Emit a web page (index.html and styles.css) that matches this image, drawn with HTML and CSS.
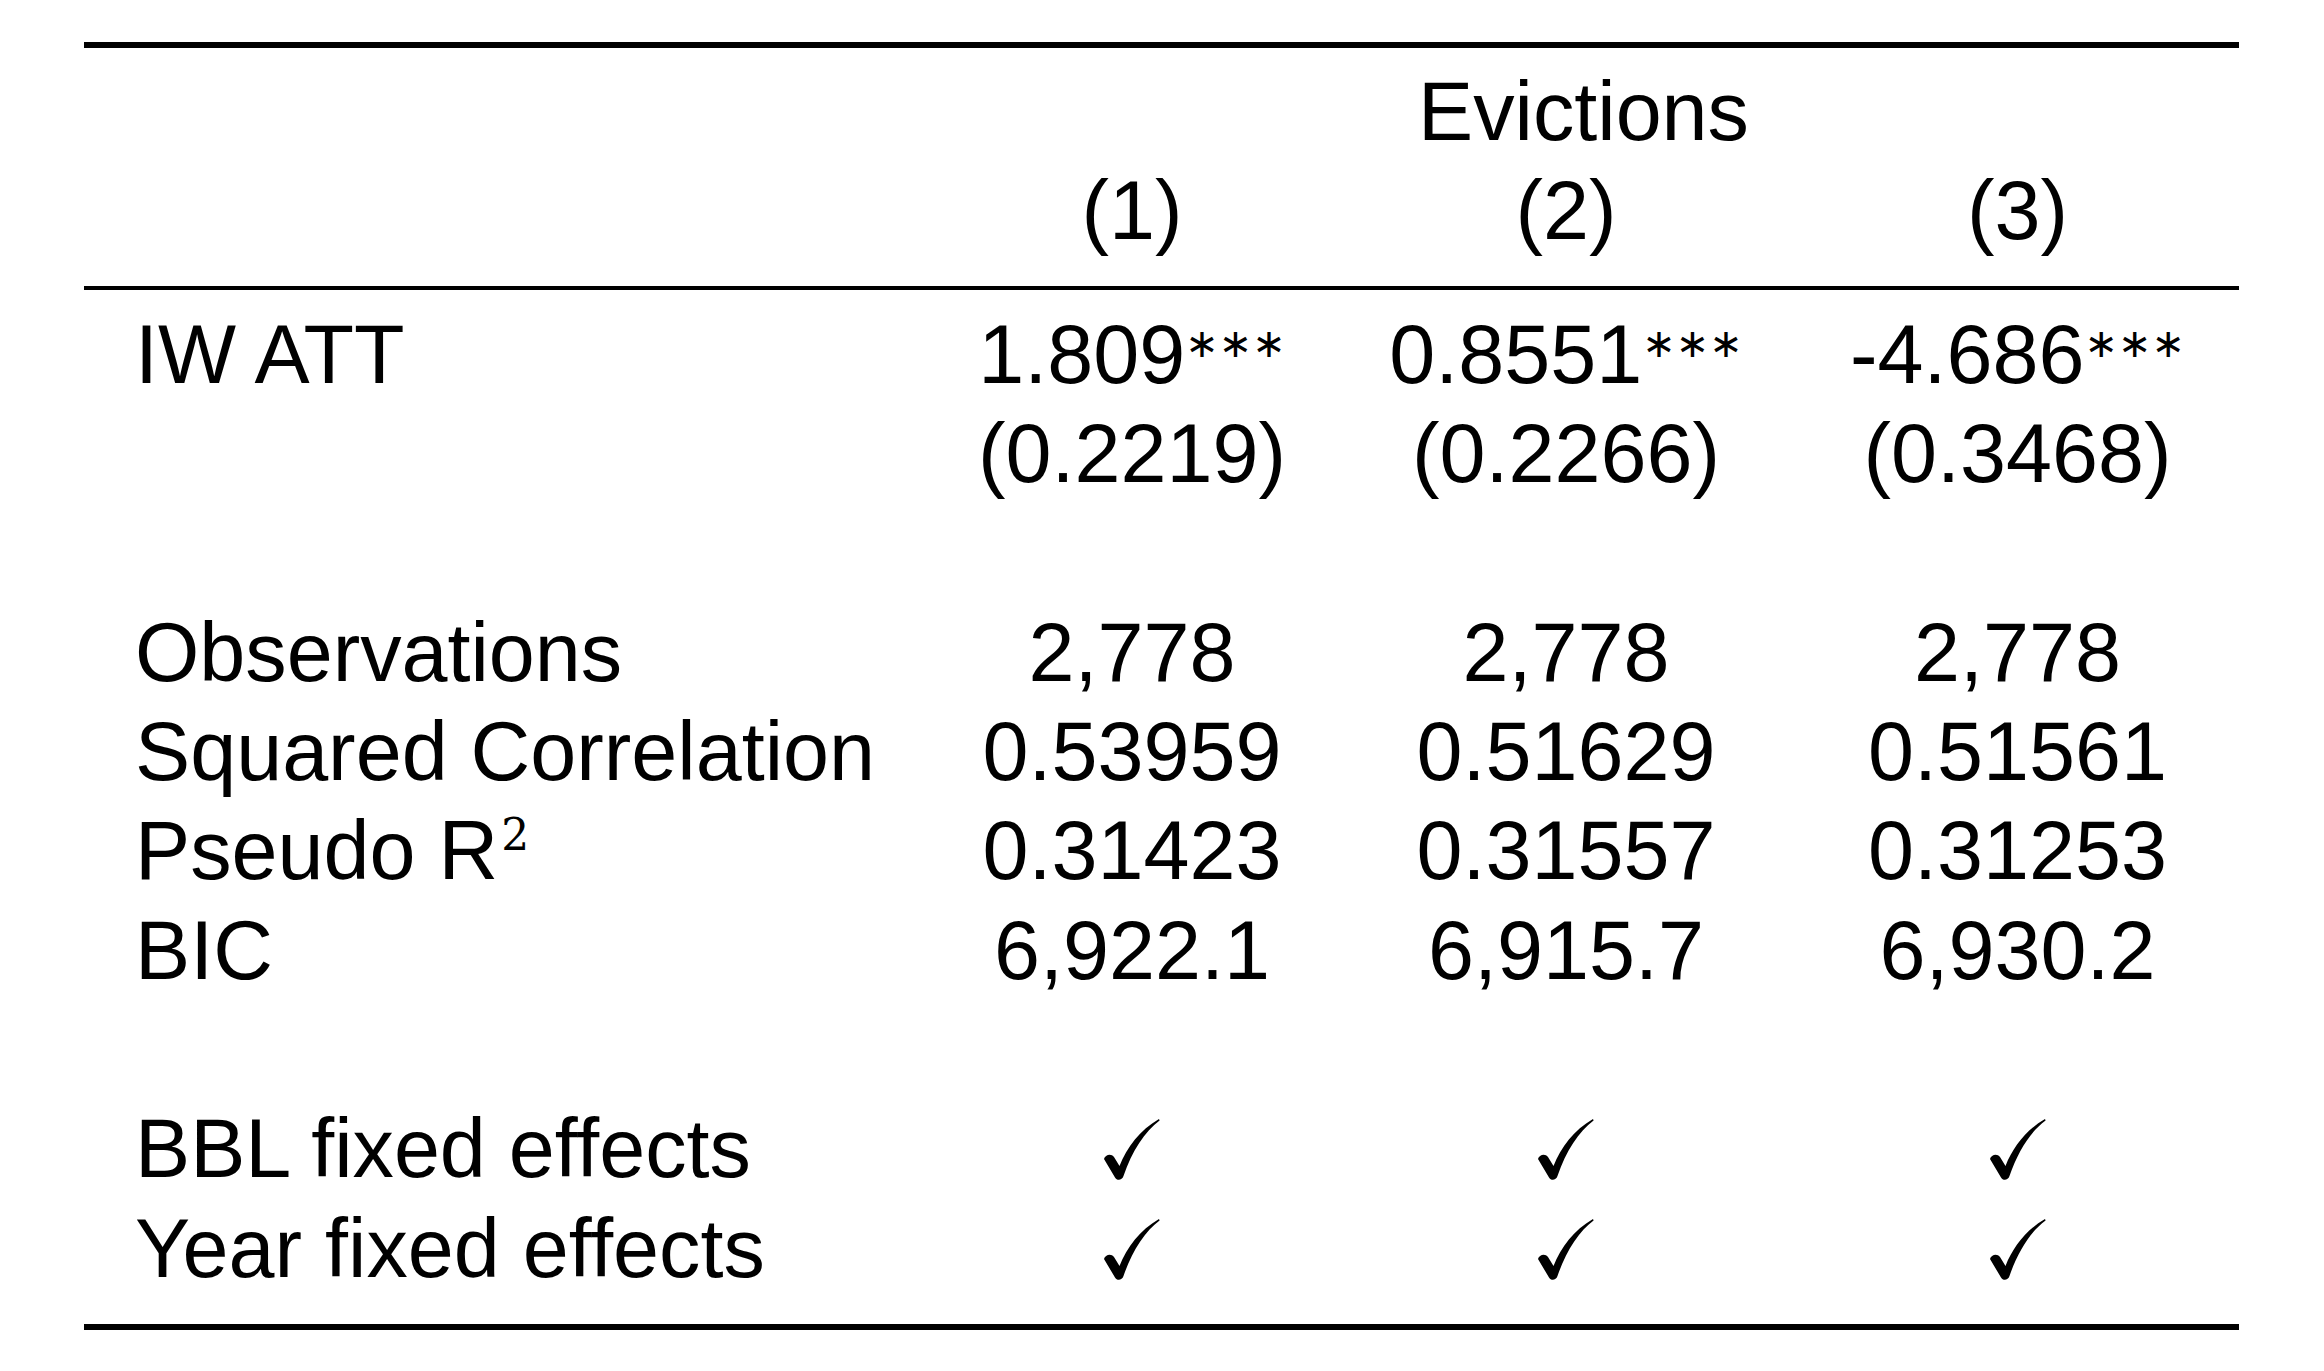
FILE: index.html
```html
<!DOCTYPE html>
<html lang="en">
<head>
<meta charset="utf-8">
<title>Evictions regression table</title>
<link rel="stylesheet" href="styles.css">
</head>
<body>
<table class="reg">
  <colgroup>
    <col class="c-label">
    <col class="c-1">
    <col class="c-2">
    <col class="c-3">
  </colgroup>
  <thead>
    <tr class="head-top">
      <th></th>
      <th colspan="3" class="num">Evictions</th>
    </tr>
    <tr class="head-bottom">
      <th></th>
      <th class="num">(1)</th>
      <th class="num">(2)</th>
      <th class="num">(3)</th>
    </tr>
  </thead>
  <tbody>
    <tr class="first">
      <td class="label">IW ATT</td>
      <td class="num">1.809<span class="stars">∗∗∗</span></td>
      <td class="num">0.8551<span class="stars">∗∗∗</span></td>
      <td class="num">-4.686<span class="stars">∗∗∗</span></td>
    </tr>
    <tr>
      <td class="label"></td>
      <td class="num">(0.2219)</td>
      <td class="num">(0.2266)</td>
      <td class="num">(0.3468)</td>
    </tr>
    <tr class="spacer"><td colspan="4"></td></tr>
    <tr>
      <td class="label">Observations</td>
      <td class="num">2,778</td>
      <td class="num">2,778</td>
      <td class="num">2,778</td>
    </tr>
    <tr>
      <td class="label">Squared Correlation</td>
      <td class="num">0.53959</td>
      <td class="num">0.51629</td>
      <td class="num">0.51561</td>
    </tr>
    <tr>
      <td class="label">Pseudo R<span class="sq">2</span></td>
      <td class="num">0.31423</td>
      <td class="num">0.31557</td>
      <td class="num">0.31253</td>
    </tr>
    <tr>
      <td class="label">BIC</td>
      <td class="num">6,922.1</td>
      <td class="num">6,915.7</td>
      <td class="num">6,930.2</td>
    </tr>
    <tr class="spacer"><td colspan="4"></td></tr>
    <tr>
      <td class="label">BBL fixed effects</td>
      <td class="num"><svg class="check" viewBox="0 0 56 62" aria-label="yes"><path d="M0,40 C1,36 7,34 10,38 L15.5,47 C23,28 36,11 55,0 L55.6,1.4 C41,12 28,32 19.5,57 C18,61.5 13,62 11,58.5 Z"/></svg></td>
      <td class="num"><svg class="check" viewBox="0 0 56 62" aria-label="yes"><path d="M0,40 C1,36 7,34 10,38 L15.5,47 C23,28 36,11 55,0 L55.6,1.4 C41,12 28,32 19.5,57 C18,61.5 13,62 11,58.5 Z"/></svg></td>
      <td class="num"><svg class="check" viewBox="0 0 56 62" aria-label="yes"><path d="M0,40 C1,36 7,34 10,38 L15.5,47 C23,28 36,11 55,0 L55.6,1.4 C41,12 28,32 19.5,57 C18,61.5 13,62 11,58.5 Z"/></svg></td>
    </tr>
    <tr class="last">
      <td class="label">Year fixed effects</td>
      <td class="num"><svg class="check" viewBox="0 0 56 62" aria-label="yes"><path d="M0,40 C1,36 7,34 10,38 L15.5,47 C23,28 36,11 55,0 L55.6,1.4 C41,12 28,32 19.5,57 C18,61.5 13,62 11,58.5 Z"/></svg></td>
      <td class="num"><svg class="check" viewBox="0 0 56 62" aria-label="yes"><path d="M0,40 C1,36 7,34 10,38 L15.5,47 C23,28 36,11 55,0 L55.6,1.4 C41,12 28,32 19.5,57 C18,61.5 13,62 11,58.5 Z"/></svg></td>
      <td class="num"><svg class="check" viewBox="0 0 56 62" aria-label="yes"><path d="M0,40 C1,36 7,34 10,38 L15.5,47 C23,28 36,11 55,0 L55.6,1.4 C41,12 28,32 19.5,57 C18,61.5 13,62 11,58.5 Z"/></svg></td>
    </tr>
  </tbody>
</table>
</body>
</html>
```

FILE: styles.css
```css
html, body {
  margin: 0;
  padding: 0;
  background: #ffffff;
}

body {
  color: #000000;
  font-family: "Liberation Sans", Arial, Helvetica, sans-serif;
}

.reg {
  margin: 42px 0 0 84px;
  width: 2155px;
  table-layout: fixed;
  border-collapse: separate;
  border-spacing: 0;
  border-top: 6px solid #000;
  border-bottom: 6px solid #000;
  font-size: 82.7px;
  line-height: 99.33px;
}

.c-label { width: 844px; }
.c-1 { width: 408px; }
.c-2 { width: 460px; }
.c-3 { width: 443px; }

.reg th,
.reg td {
  padding: 0;
  font-weight: normal;
  white-space: nowrap;
  vertical-align: baseline;
}

.reg .num {
  text-align: center;
}

.reg .label {
  text-align: left;
  padding-left: 51px;
}

.head-top th {
  padding-top: 14px;
}

.head-bottom th {
  padding-bottom: 25px;
  border-bottom: 4px solid #000;
}

.first td {
  padding-top: 15px;
}

.last td {
  padding-bottom: 26px;
}

.spacer td {
  height: 99.33px;
}

.stars {
  font-family: "DejaVu Sans", sans-serif;
  font-size: 40px;
  line-height: 0;
  vertical-align: 26px;
}

.sq {
  font-family: "DejaVu Serif", "Liberation Serif", serif;
  font-size: 44px;
  line-height: 0;
  vertical-align: 29px;
  margin-left: 3px;
}

.check {
  display: inline-block;
  width: 56px;
  height: 62px;
  vertical-align: -4px;
  fill: #000;
}
```
